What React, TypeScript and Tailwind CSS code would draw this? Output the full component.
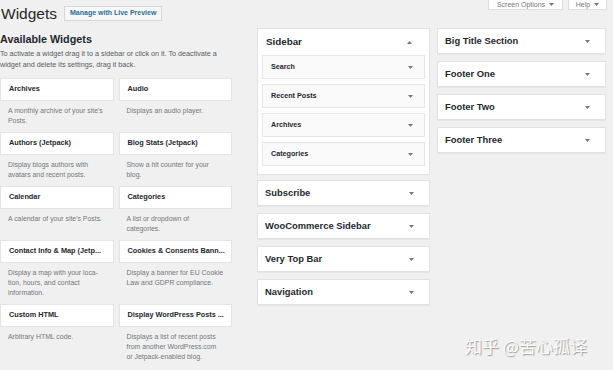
import React from "react";

const WIDGETS = [
  { t: "Archives", d: ["A monthly archive of your site's", "Posts."] },
  { t: "Audio", d: ["Displays an audio player."] },
  { t: "Authors (Jetpack)", d: ["Display blogs authors with", "avatars and recent posts."] },
  { t: "Blog Stats (Jetpack)", d: ["Show a hit counter for your", "blog."] },
  { t: "Calendar", d: ["A calendar of your site's Posts."] },
  { t: "Categories", d: ["A list or dropdown of", "categories."] },
  { t: "Contact Info & Map (Jetp...", d: ["Display a map with your loca-", "tion, hours, and contact", "information."] },
  { t: "Cookies & Consents Bann...", d: ["Display a banner for EU Cookie", "Law and GDPR compliance."] },
  { t: "Custom HTML", d: ["Arbitrary HTML code."] },
  { t: "Display WordPress Posts ...", d: ["Displays a list of recent posts", "from another WordPress.com", "or Jetpack-enabled blog."] },
];

const SIDEBAR_ITEMS = ["Search", "Recent Posts", "Archives", "Categories"];
const COL2 = ["Subscribe", "WooCommerce Sidebar", "Very Top Bar", "Navigation"];
const COL3 = ["Big Title Section", "Footer One", "Footer Two", "Footer Three"];

function Caret({ up = false }: { up?: boolean }) {
  return (
    <svg width="5" height="3" viewBox="0 0 5 3" className="shrink-0">
      {up ? (
        <polygon points="0,3 5,3 2.5,0" fill="#72777c" />
      ) : (
        <polygon points="0,0 5,0 2.5,3" fill="#72777c" />
      )}
    </svg>
  );
}

function Box({ title }: { title: string }) {
  return (
    <div className="mb-[7px] flex h-[26px] items-center justify-between border border-[#e2e2e2] bg-white pl-[7px] pr-[15px] shadow-[0_1px_1px_rgba(0,0,0,0.04)]">
      <span className="text-[9.4px] font-bold text-[#23282d]">{title}</span>
      <Caret />
    </div>
  );
}

export default function App() {
  return (
    <div
      className="relative h-[370px] w-[613px] overflow-hidden bg-[#f0f0f0] text-[#23282d]"
      style={{ fontFamily: '"Liberation Sans", Arial, sans-serif' }}
    >
      {/* screen options / help tabs */}
      <div className="absolute right-[6px] top-0 flex gap-[5px]">
        <div className="flex h-[10px] w-[75px] items-center justify-center gap-[4px] border border-t-0 border-[#ddd] bg-white text-[7px] leading-[8px] text-[#72777c]">
          Screen Options <Caret />
        </div>
        <div className="flex h-[10px] w-[39px] items-center justify-center gap-[4px] border border-t-0 border-[#ddd] bg-white text-[7px] leading-[8px] text-[#72777c]">
          Help <Caret />
        </div>
      </div>

      <div className="flex items-center gap-[7px] pl-[1px] pt-[5px]">
        <h1 className="text-[15.5px] leading-[17px] text-[#23282d]">Widgets</h1>
        <span className="flex h-[15px] items-center border border-[#d6d6d6] bg-[#f7f7f7] px-[5px] text-[7px] font-bold text-[#2a6e9b]">
          Manage with Live Preview
        </span>
      </div>

      <div className="flex pt-[6px]">
        <div className="w-[232px] shrink-0">
          <h2 className="mt-[4px] text-[10.8px] font-bold leading-[14px]">Available Widgets</h2>
          <p className="mt-[2px] text-[7.2px] leading-[11px] text-[#555d66]">
            To activate a widget drag it to a sidebar or click on it. To deactivate a
            <br />
            widget and delete its settings, drag it back.
          </p>
          <div className="mt-[8px] grid grid-cols-2 gap-x-[5px]">
            {WIDGETS.map((w) => (
              <div key={w.t} className="pb-[6px]">
                <div className="flex h-[23px] items-center overflow-hidden whitespace-nowrap border border-[#e4e4e4] bg-white pl-[8px] text-[7.3px] font-bold text-[#23282d]">
                  {w.t}
                </div>
                <div className="pl-[8px] pt-[5px] text-[6.9px] leading-[10px] text-[#72777c]">
                  {w.d.map((l) => (
                    <div key={l} className="whitespace-nowrap">
                      {l}
                    </div>
                  ))}
                </div>
              </div>
            ))}
          </div>
        </div>

        <div className="ml-[25px] w-[173px] shrink-0">
          <div className="mb-[5px] border border-[#e2e2e2] bg-white px-[4px] pb-[8px]">
            <div className="flex h-[26px] items-center justify-between pl-[4px] pr-[13px]">
              <span className="text-[9.8px] font-bold">Sidebar</span>
              <Caret up />
            </div>
            <div className="flex flex-col gap-[5px]">
              {SIDEBAR_ITEMS.map((s) => (
                <div
                  key={s}
                  className="flex h-[24px] items-center justify-between border border-[#e6e6e6] bg-[#fafafa] pl-[8px] pr-[11px]"
                >
                  <span className="text-[7.2px] font-bold">{s}</span>
                  <Caret />
                </div>
              ))}
            </div>
          </div>
          {COL2.map((t) => (
            <Box key={t} title={t} />
          ))}
        </div>

        <div className="ml-[7px] w-[169px] shrink-0">
          {COL3.map((t) => (
            <Box key={t} title={t} />
          ))}
        </div>
      </div>

      <div
        className="absolute left-[465px] top-[336px] text-[17px] leading-[20px] text-[#fafafa] [text-shadow:1px_1px_1px_rgba(0,0,0,0.35)]"
        style={{ fontFamily: '"Noto Sans CJK SC", sans-serif' }}
      >
        知乎 @苦心孤译
      </div>
    </div>
  );
}
